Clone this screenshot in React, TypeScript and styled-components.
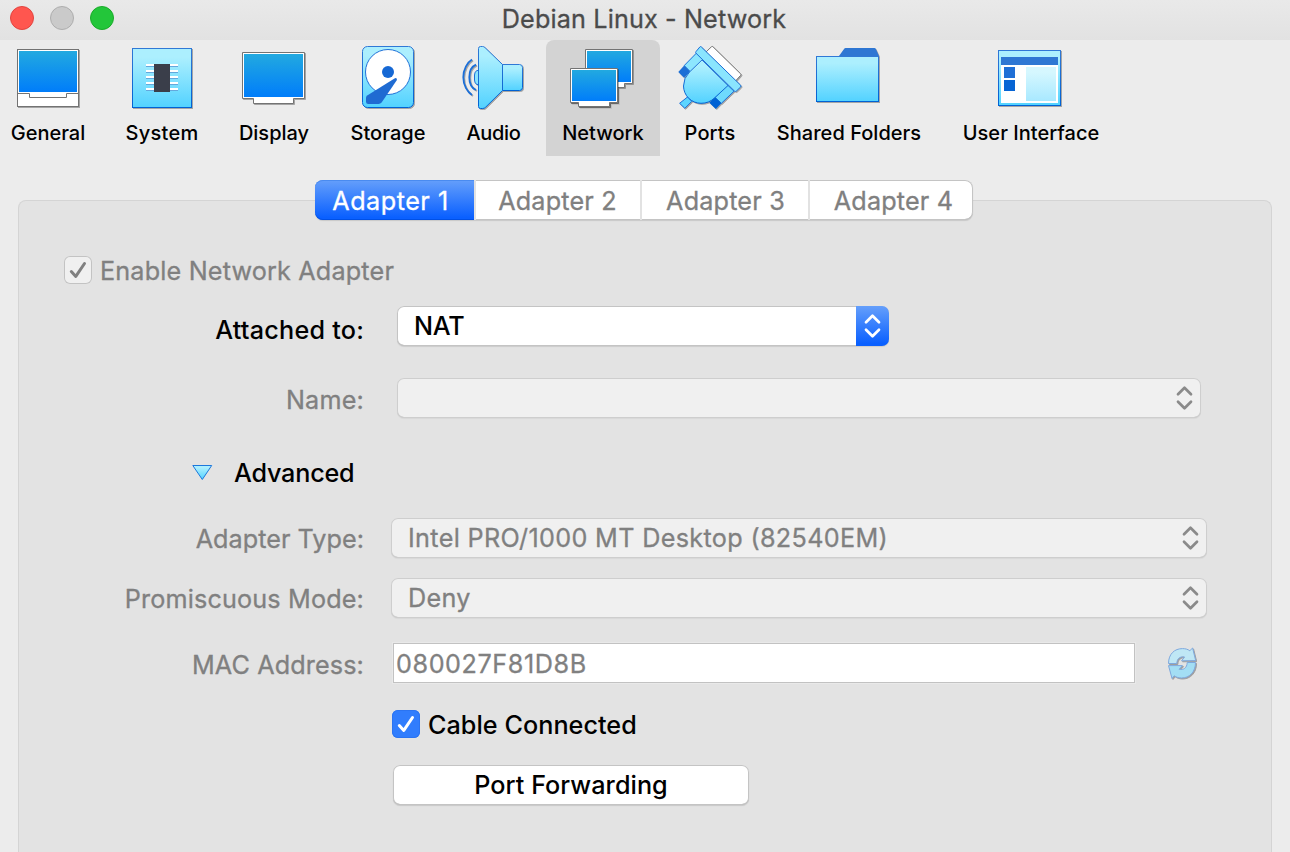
import React from "react";
import styled, { createGlobalStyle, css } from "styled-components";

const GlobalStyle = createGlobalStyle`
  *, *::before, *::after { box-sizing: border-box; }
  body {
    margin: 0;
    background: #ececec;
    font-family: Inter, "Liberation Sans", sans-serif;
    font-size: 25.2px;
    color: #000;
  }
`;

const DISABLED = "#808080";

const thicken = css`
  -webkit-text-stroke: 0.3px currentColor;
`;

const Window = styled.div`
  display: flex;
  flex-direction: column;
  width: 1290px;
  height: 852px;
  overflow: hidden;
  background: #ececec;
`;

/* Title bar */

const TitleBar = styled.header`
  display: grid;
  grid-template-columns: 114px 1fr 114px;
  align-items: center;
  height: 40px;
  flex: none;
  background: linear-gradient(#e9e9e9, #e2e2e2);
`;

const Lights = styled.div`
  display: flex;
  gap: 16px;
  padding: 0 0 4px 10px;
`;

const Light = styled.span<{ $fill: string; $edge: string }>`
  width: 24px;
  height: 24px;
  border-radius: 50%;
  background: ${(p) => p.$fill};
  border: 1px solid ${(p) => p.$edge};
`;

const Title = styled.h1`
  margin: 0;
  padding: 0 2px 3px 0;
  font-size: 25.2px;
  font-weight: 400;
  line-height: 36px;
  letter-spacing: 0.14px;
  text-align: center;
  color: #4b4b4b;
  ${thicken}
`;

/* Toolbar */

const Toolbar = styled.nav`
  display: flex;
  gap: 8px;
  flex: none;
  height: 116px;
  margin-left: -5px;
`;

const ToolItem = styled.button<{ $width: number; $active?: boolean }>`
  display: flex;
  flex-direction: column;
  align-items: center;
  flex: none;
  width: ${(p) => p.$width}px;
  padding: 4px 0 0;
  border: 0;
  border-radius: 8px 8px 0 0;
  background: ${(p) => (p.$active ? "#d3d3d3" : "transparent")};
  color: #000;

  svg { display: block; flex: none; margin-bottom: 6px; }
`;

const ToolName = styled.span<{ $track: number; $shift?: number }>`
  font: 500 20px/30px Inter, "Liberation Sans", sans-serif;
  letter-spacing: ${(p) => p.$track}px;
  margin-left: ${(p) => p.$shift ?? 0}px;
  white-space: nowrap;
`;

/* Tabs and panel */

const Content = styled.main`
  display: flex;
  flex-direction: column;
  flex: 1;
  padding: 24px 18px 0;
`;

const Tabs = styled.div`
  position: relative;
  z-index: 1;
  display: flex;
  width: 658px;
  height: 40px;
  flex: none;
  margin: 0 0 -20px 297px;
  border-radius: 8px;
  background: #fff;
  box-shadow: inset 0 0 0 1px #c4c4c4, inset 0 -1px 0 #a8a8a8, 0 1px 1px rgba(0, 0, 0, 0.12);
`;

const Tab = styled.button<{ $width: number; $left?: number; $active?: boolean; $track?: number }>`
  width: ${(p) => p.$width}px;
  padding: 1px 0 0 ${(p) => p.$left ?? 1}px;
  border: 0;
  background: none;
  font: 400 25.2px/40px Inter, "Liberation Sans", sans-serif;
  letter-spacing: ${(p) => p.$track ?? 0.18}px;
  color: ${DISABLED};
  ${thicken}

  & + & { box-shadow: inset 2px 0 0 #e2e2e2; }
  &:nth-child(2) { box-shadow: none; }

  ${(p) =>
    p.$active &&
    css`
      padding: 1px 8px 0 0;
      color: #fff;
      border-radius: 8px 0 0 8px;
      background: linear-gradient(#659ffb, #0a60ff 94%);
      box-shadow: inset 0 1px 0 #4a8bf0, inset 0 -1px 0 #0050e6;
    `}
`;

const Panel = styled.section`
  flex: 1;
  display: flex;
  flex-direction: column;
  border: 1px solid #d4d4d4;
  border-bottom: 0;
  border-radius: 8px 8px 0 0;
  background: #e3e3e3;
`;

const Row = styled.div<{ $top: number; $height?: number; $indent?: number }>`
  display: flex;
  align-items: center;
  flex: none;
  height: ${(p) => p.$height ?? 40}px;
  margin-top: ${(p) => p.$top}px;
  padding-left: ${(p) => p.$indent ?? 0}px;
`;

const Label = styled.label<{ $gap: number; $drop: number; $track: number; $strong?: boolean }>`
  flex: none;
  width: 345px;
  height: 40px;
  margin-right: ${(p) => p.$gap}px;
  padding-top: ${(p) => p.$drop}px;
  line-height: 40px;
  text-align: right;
  white-space: nowrap;
  letter-spacing: ${(p) => p.$track}px;
  font-weight: ${(p) => (p.$strong ? 500 : 400)};
  color: ${(p) => (p.$strong ? "#000" : DISABLED)};
  ${(p) => !p.$strong && thicken}
`;

const Caption = styled.span<{ $track: number; $strong?: boolean }>`
  padding-top: 2px;
  line-height: 28px;
  white-space: nowrap;
  letter-spacing: ${(p) => p.$track}px;
  font-weight: ${(p) => (p.$strong ? 500 : 400)};
  color: ${(p) => (p.$strong ? "#000" : DISABLED)};
  ${(p) => !p.$strong && thicken}
`;

const Select = styled.div<{ $width: number; $enabled?: boolean; $track?: number }>`
  display: flex;
  align-items: stretch;
  justify-content: space-between;
  width: ${(p) => p.$width}px;
  height: 40px;
  padding-left: 17px;
  border-radius: 7px;
  line-height: 40px;
  letter-spacing: ${(p) => p.$track ?? 0}px;
  font-weight: ${(p) => (p.$enabled ? 500 : 400)};
  color: ${(p) => (p.$enabled ? "#000" : DISABLED)};
  background: ${(p) => (p.$enabled ? "#fff" : "#f0f0f0")};
  ${(p) => !p.$enabled && thicken}
  box-shadow: ${(p) =>
    p.$enabled
      ? "inset 0 0 0 1px #c4c4c4, inset 0 -1px 0 #a8a8a8, 0 1px 1px rgba(0, 0, 0, 0.1)"
      : "inset 0 0 0 1px #cecece, inset 0 -1px 0 #c0c0c0, 0 1px 1px rgba(0, 0, 0, 0.05)"};
`;

const Stepper = styled.span<{ $enabled?: boolean }>`
  display: flex;
  align-items: center;
  justify-content: center;
  width: 33px;
  border-radius: 0 7px 7px 0;
  color: ${(p) => (p.$enabled ? "#fff" : "#8a8a8a")};
  background: ${(p) => (p.$enabled ? "linear-gradient(#659ffb, #0a60ff 94%)" : "none")};
`;

const CheckBox = styled.span<{ $on?: boolean }>`
  display: flex;
  width: 28px;
  height: 28px;
  flex: none;
  margin-right: 8px;
  border-radius: 6px;
  color: ${(p) => (p.$on ? "#fff" : "#808080")};
  background: ${(p) => (p.$on ? "#317dfd" : "#f0f0f0")};
  box-shadow: ${(p) => (p.$on ? "inset 0 0 0 1px #2b74f2" : "inset 0 0 0 1px #c3c3c3")};
`;

const AdvancedToggle = styled.button`
  display: flex;
  align-items: center;
  gap: 21px;
  padding: 0;
  border: 0;
  background: none;
  font: 500 25.2px/40px Inter, "Liberation Sans", sans-serif;
  letter-spacing: -0.2px;
  color: #000;

  svg { margin-bottom: 1px; }
`;

const MacField = styled.div`
  width: 742px;
  height: 40px;
  margin-right: 32px;
  padding-left: 2px;
  border: 1px solid #c2c2c2;
  background: #fff;
  box-shadow: 0 0 0 1px #e9e9e9;
  line-height: 41px;
  letter-spacing: 0.58px;
  color: ${DISABLED};
  ${thicken}
`;

const PushButton = styled.button`
  width: 356px;
  height: 40px;
  padding: 0;
  border: 0;
  border-radius: 7px;
  background: #fff;
  box-shadow: inset 0 0 0 1px #c4c4c4, inset 0 -1px 0 #a8a8a8, 0 1px 1px rgba(0, 0, 0, 0.12);
  font: 500 25.2px/40px Inter, "Liberation Sans", sans-serif;
  letter-spacing: 0.04px;
  color: #000;
`;

/* Icons */

const Gradients = () => (
  <defs>
    <linearGradient id="screen" x1="0" y1="0" x2="0" y2="1">
      <stop offset="0" stopColor="#22a9e0" />
      <stop offset="1" stopColor="#007dfa" />
    </linearGradient>
    <linearGradient id="sky" x1="0" y1="0" x2="0" y2="1">
      <stop offset="0.15" stopColor="#aceffe" />
      <stop offset="1" stopColor="#52d2ff" />
    </linearGradient>
    <linearGradient id="edge" x1="0" y1="0" x2="0" y2="1">
      <stop offset="0" stopColor="#3078d6" />
      <stop offset="1" stopColor="#0062d4" />
    </linearGradient>
    <filter id="drop" x="-10%" y="-10%" width="120%" height="120%" colorInterpolationFilters="sRGB">
      <feDropShadow dx="1" dy="1" stdDeviation="0.2" floodColor="#000" floodOpacity="0.3" />
    </filter>
  </defs>
);

const Glyph = ({ x, width = 68, children }: { x: number; width?: number; children: React.ReactNode }) => (
  <svg width={width} height="68" viewBox={`${x} 44 ${width} 68`} fill="none">
    <Gradients />
    <g filter="url(#drop)">{children}</g>
  </svg>
);

const GeneralIcon = () => (
  <Glyph x={14}>
    <rect x="17.5" y="49.5" width="61" height="57" fill="#fff" stroke="#737373" />
    <rect x="19" y="51" width="58" height="41" fill="url(#screen)" />
    <path d="M17.5 93.5H29.5V97.5H66.5V93.5H78.5" stroke="#737373" />
  </Glyph>
);

const SystemIcon = () => (
  <Glyph x={128} width={67}>
    <rect x="132.5" y="48.5" width="59" height="59" fill="url(#sky)" stroke="url(#edge)" />
    {[64, 70, 76, 82, 88].map((y) => (
      <g key={y}>
        <rect x="146" y={y} width="32" height="2" fill="#fff" />
        <rect x="146" y={y + 2} width="32" height="1" fill="#64a8dc" />
      </g>
    ))}
    <rect x="154" y="64" width="16" height="28" fill="#3a3e4a" />
  </Glyph>
);

const DisplayIcon = () => (
  <Glyph x={240}>
    <path d="M242.5 52.5H304.5V98.5H293.5V103.5H253.5V98.5H242.5Z" fill="#fff" stroke="#737373" />
    <rect x="244" y="54" width="59" height="43" fill="url(#screen)" />
  </Glyph>
);

const StorageIcon = () => (
  <Glyph x={354}>
    <rect x="362.5" y="46.5" width="51" height="61" rx="5" fill="url(#sky)" stroke="url(#edge)" />
    <circle cx="388" cy="72" r="22.5" fill="#fff" stroke="#2272d8" />
    <circle cx="388" cy="72" r="6" fill="#1668d4" />
    <path d="M394.5 78.4L367.2 95.6Q366 96.6 366 98V101.8Q366 104 368.2 104H378.6Q380.4 104 381.6 102.6L396.6 80.6Q397.4 79 396.4 78.2Q395.5 77.8 394.5 78.4Z" fill="#1f6bd2" />
  </Glyph>
);

const AudioIcon = () => (
  <Glyph x={460}>
    <path d="M478.5 70.5H477Q474.5 71.5 474.5 75V80Q474.5 83.5 477 84.5H478.5Z" fill="#8ae4fe" stroke="#1b6fd8" />
    <path d="M502.5 64.5H519.5Q522.5 64.5 522.5 67.5V87.5Q522.5 90.5 519.5 90.5H502.5Z" fill="url(#sky)" stroke="url(#edge)" />
    <path d="M480.5 46.5H482.5Q484 46.5 485 47.6L502.5 64.5V90.5L485.6 107.2Q484.4 108.5 482.6 108.5H480.5Q478.5 108.5 478.5 106.5V48.5Q478.5 46.5 480.5 46.5Z" fill="url(#sky)" stroke="url(#edge)" />
    <path d="M472 59.6C467.2 62.5 463.3 69.5 463.3 77.3C463.3 85.1 467.2 92 472 94.9" stroke="#1b6fd8" strokeWidth="1.8" />
    <path d="M476 64.7C471.8 66.5 469.3 71.5 469.3 77.3C469.3 83.1 471.8 88.2 476 90" stroke="#1b6fd8" strokeWidth="1.8" />
  </Glyph>
);

const NetworkIcon = () => (
  <Glyph x={569}>
    <path d="M585.5 49.5H632.5V83.5H624.5V87.5H593.5V83.5H585.5Z" fill="#fff" stroke="#737373" />
    <rect x="587" y="51" width="44" height="31" fill="url(#screen)" />
    <path d="M570.5 68.5H617.5V102.5H609.5V106.5H578.5V102.5H570.5Z" fill="#fff" stroke="#737373" filter="url(#drop)" />
    <rect x="572" y="70" width="44" height="31" fill="url(#screen)" />
  </Glyph>
);

const PortsIcon = () => (
  <Glyph x={676}>
    <path d="M713 46.8L740.6 73.8Q741.4 74.6 740.6 75.4L735.5 81L706 52L711.4 46.8Q712.2 46 713 46.8Z" fill="#fff" stroke="#737373" />
    <path d="M696.5 53L703 60L690.3 71.7L684.2 65.6Z" fill="#8de6fe" stroke="#1b6fd8" />
    <path d="M684.2 65.6L690.3 71.7L684 77.8L678.3 72Z" fill="#1c6fd6" />
    <path d="M727.5 85L734 91.2L721.4 103.3L715 97.3Z" fill="#6edafe" stroke="#1b6fd8" />
    <path d="M715 97.3L721.4 103.3L715.8 108.9L709.3 102.7Z" fill="#0062d4" />
    <path d="M687.5 97L691.8 101.3L684.8 108.3L679.6 103.3Z" fill="#5cd5ff" stroke="#1b6fd8" />
    <path d="M702 60L689.5 72Q683.5 78 683.5 86A17.5 17.5 0 0 0 701 103.3Q709 103.5 715 97.5L728 85.5Z" fill="url(#sky)" stroke="url(#edge)" />
    <path d="M701.3 46.9L740.6 85.2Q741.5 86 740.6 87L736.2 91.2Q735.4 91.9 734.5 91.1L696 53.2Q695.2 52.4 696 51.6L699.9 46.9Q700.6 46.2 701.3 46.9Z" fill="#8ae5fe" stroke="#1b6fd8" />
  </Glyph>
);

const FolderIcon = () => (
  <Glyph x={815}>
    <path d="M839 56L844.2 48.8Q844.7 48 845.6 48H874.5Q875.5 48 875.9 48.9L879 56Z" fill="#2f77d3" />
    <rect x="816.5" y="56.5" width="62" height="45" fill="url(#sky)" stroke="url(#edge)" />
  </Glyph>
);

const InterfaceIcon = () => (
  <Glyph x={997}>
    <rect x="998.5" y="50.5" width="62" height="55" fill="url(#sky)" stroke="url(#edge)" />
    <rect x="1001" y="57" width="57" height="8" fill="#2f77d3" />
    <rect x="1001" y="65" width="57" height="38" fill="#fff" />
    <rect x="1004" y="67" width="11" height="11" fill="#1f6fd6" />
    <rect x="1004" y="80" width="11" height="11" fill="#0664d4" />
    <rect x="1026" y="67" width="30" height="34" fill="url(#sky)" opacity="0.5" />
  </Glyph>
);

const Chevrons = () => (
  <svg width="17" height="26" viewBox="0 0 17 26" fill="none" stroke="currentColor" strokeWidth="2.7" strokeLinecap="round" strokeLinejoin="round">
    <path d="M2 9.2L8.5 2.7L15 9.2M2 16.8L8.5 23.3L15 16.8" />
  </svg>
);

const Check = () => (
  <svg width="28" height="28" viewBox="0 0 28 28" fill="none" stroke="currentColor" strokeWidth="3" strokeLinecap="round" strokeLinejoin="round">
    <path d="M7.3 15.5L11.8 20.4L20.5 7.5" />
  </svg>
);

const Triangle = () => (
  <svg width="21" height="17" viewBox="0 0 21 17">
    <Gradients />
    <path d="M0.8 1.5H19.7L10.3 15.5Z" fill="url(#sky)" stroke="#1c78dc" strokeLinejoin="round" />
  </svg>
);

const RefreshGlyph = styled.svg`
  margin-top: 2px;
`;

const Refresh = () => (
  <RefreshGlyph width="30" height="34" viewBox="0 0 30 34" strokeLinejoin="round">
    <Gradients />
    <g filter="url(#drop)" stroke="#7fa8dd" strokeWidth="1">
      <path d="M1.5 16.5C1.5 7 7.5 1.6 15.5 1.6C18.5 1.6 20.8 2.3 22.8 3.7L25.6 1L28.7 13.6L14.5 13.8L17.6 10C13 9.3 10 11.5 9.8 16.5Z" fill="#bfe7f5" />
      <path d="M28.5 15.5C28.5 25 22.5 31 14.5 31C11.8 31 9.2 30.2 7.2 28.8L5 31.5L1.5 18.6H15.5L12.2 22.3C16.5 23.2 20 21 20.2 15.5Z" fill="#a3def4" />
    </g>
  </RefreshGlyph>
);

const tools = [
  { name: "General", width: 106, track: 0, icon: <GeneralIcon /> },
  { name: "System", width: 105, track: 0.25, shift: 1, icon: <SystemIcon /> },
  { name: "Display", width: 104, track: 0, icon: <DisplayIcon /> },
  { name: "Storage", width: 108, track: 0.05, icon: <StorageIcon /> },
  { name: "Audio", width: 88, track: -0.3, shift: -1, icon: <AudioIcon /> },
  { name: "Network", width: 114, track: 0, icon: <NetworkIcon />, active: true },
  { name: "Ports", width: 84, track: 0.1, icon: <PortsIcon /> },
  { name: "Shared Folders", width: 178, track: 0.03, icon: <FolderIcon /> },
  { name: "User Interface", width: 170, track: 0.02, icon: <InterfaceIcon /> },
];

export default function App() {
  return (
    <Window>
      <GlobalStyle />
      <TitleBar>
        <Lights>
          <Light $fill="#ff564f" $edge="#e2443f" />
          <Light $fill="#cacaca" $edge="#aeaeae" />
          <Light $fill="#23c63a" $edge="#1aab29" />
        </Lights>
        <Title>Debian Linux - Network</Title>
      </TitleBar>

      <Toolbar>
        {tools.map((t) => (
          <ToolItem key={t.name} $width={t.width} $active={t.active}>
            {t.icon}
            <ToolName $track={t.track} $shift={t.shift}>{t.name}</ToolName>
          </ToolItem>
        ))}
      </Toolbar>

      <Content>
        <Tabs>
          <Tab $width={159} $active $track={0.5}>Adapter 1</Tab>
          <Tab $width={166}>Adapter 2</Tab>
          <Tab $width={168} $left={3}>Adapter 3</Tab>
          <Tab $width={165} $left={6}>Adapter 4</Tab>
        </Tabs>
        <Panel>
          <Row $top={55} $height={28} $indent={45}>
            <CheckBox><Check /></CheckBox>
            <Caption $track={0.17}>Enable Network Adapter</Caption>
          </Row>
          <Row $top={22}>
            <Label $gap={33} $drop={4} $track={0.22} $strong>Attached to:</Label>
            <Select $width={492} $enabled $track={-0.2}>
              NAT
              <Stepper $enabled><Chevrons /></Stepper>
            </Select>
          </Row>
          <Row $top={32}>
            <Label $gap={33} $drop={2} $track={0.2}>Name:</Label>
            <Select $width={804}>
              <span />
              <Stepper><Chevrons /></Stepper>
            </Select>
          </Row>
          <Row $top={35} $indent={173}>
            <AdvancedToggle><Triangle />Advanced</AdvancedToggle>
          </Row>
          <Row $top={25}>
            <Label $gap={27} $drop={1} $track={0.04}>Adapter Type:</Label>
            <Select $width={816} $track={0.33}>
              Intel PRO/1000 MT Desktop (82540EM)
              <Stepper><Chevrons /></Stepper>
            </Select>
          </Row>
          <Row $top={20}>
            <Label $gap={27} $drop={1} $track={0.15}>Promiscuous Mode:</Label>
            <Select $width={816} $track={0.3}>
              Deny
              <Stepper><Chevrons /></Stepper>
            </Select>
          </Row>
          <Row $top={25}>
            <Label $gap={29} $drop={2} $track={0.12}>MAC Address:</Label>
            <MacField>080027F81D8B</MacField>
            <Refresh />
          </Row>
          <Row $top={27} $height={28} $indent={373}>
            <CheckBox $on><Check /></CheckBox>
            <Caption $track={0.04} $strong>Cable Connected</Caption>
          </Row>
          <Row $top={27} $indent={374}>
            <PushButton>Port Forwarding</PushButton>
          </Row>
        </Panel>
      </Content>
    </Window>
  );
}
